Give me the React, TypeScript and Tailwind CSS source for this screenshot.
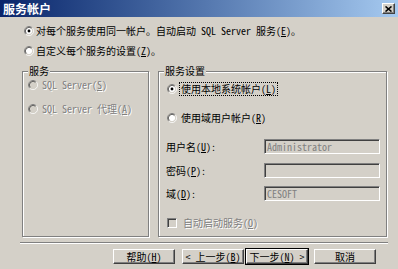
import type { ReactNode } from 'react'

const FACE = 'bg-[#d4d0c8]'
const DIM = 'text-[#808080] [text-shadow:1px_1px_0_#ffffff]'

function Radio({ checked = false, disabled = false }: { checked?: boolean; disabled?: boolean }) {
  return (
    <svg width="10" height="10" viewBox="0 0 12 12" className="shrink-0">
      <circle cx="6" cy="6" r="4" fill={disabled ? '#d4d0c8' : '#ffffff'} />
      <path d="M2.11 9.89 A5.5 5.5 0 0 1 9.89 2.11" fill="none" stroke="#808080" strokeWidth="1" />
      <path d="M9.89 2.11 A5.5 5.5 0 0 1 2.11 9.89" fill="none" stroke="#ffffff" strokeWidth="1" />
      <path d="M2.82 9.18 A4.5 4.5 0 0 1 9.18 2.82" fill="none" stroke="#404040" strokeWidth="1" />
      <path d="M9.18 2.82 A4.5 4.5 0 0 1 2.82 9.18" fill="none" stroke="#d4d0c8" strokeWidth="1" />
      {checked && <circle cx="6" cy="6" r="1.7" fill="#000000" />}
    </svg>
  )
}

function Field({ value }: { value?: string }) {
  return (
    <div className="w-[116px] h-[15px] border border-t-[#808080] border-l-[#808080] border-b-white border-r-white shadow-[inset_1px_1px_0_#404040] bg-[#d4d0c8] text-[#808080] pl-[2px] leading-[13px] text-[10px]">
      {value}
    </div>
  )
}

function Button({ children, primary = false }: { children: ReactNode; primary?: boolean }) {
  return (
    <div className={primary ? 'border border-black' : 'border border-transparent'}>
      <div className="w-[62px] h-[15px] flex items-center justify-center border border-t-white border-l-white border-b-[#404040] border-r-[#404040] shadow-[inset_-1px_-1px_0_#808080] text-[10px] leading-[12px]">
        {children}
      </div>
    </div>
  )
}

function Group({ title, className, children }: { title: string; className: string; children: ReactNode }) {
  return (
    <fieldset
      className={`${className} h-[172px] border border-[#808080] shadow-[inset_1px_1px_0_#ffffff,1px_1px_0_#ffffff]`}
    >
      <legend className={`ml-[5px] px-[1px] leading-[12px] ${FACE}`}>{title}</legend>
      {children}
    </fieldset>
  )
}

export default function App() {
  return (
    <div className={`w-[398px] h-[269px] overflow-hidden ${FACE} text-[10px] leading-[12px] text-black font-['Noto_Sans_Mono_CJK_SC','Noto_Sans_CJK_SC',sans-serif] flex flex-col`}>
      {/* title bar */}
      <div className="h-[17px] shrink-0 flex items-center justify-between pl-[3px] pr-[3px] bg-gradient-to-r from-[#0a246a] to-[#a6caf0]">
        <span className="text-white font-bold text-[12px] leading-[14px]">服务帐户</span>
        <div className="w-[13px] h-[11px] flex items-center justify-center border border-t-white border-l-white border-b-[#404040] border-r-[#404040] shadow-[inset_-1px_-1px_0_#808080] bg-[#d4d0c8]">
          <svg width="7" height="6" viewBox="0 0 7 6">
            <path d="M0.5 0.5 L6.5 5.5 M6.5 0.5 L0.5 5.5" stroke="#000" strokeWidth="1.6" />
          </svg>
        </div>
      </div>

      <div className="pl-[22px]">
        <div className="mt-[8px] ml-[2px] flex items-center gap-[2px]">
          <Radio checked />
          <span>
            对每个服务使用同一帐户。自动启动 SQL Server 服务(<u>E</u>)。
          </span>
        </div>
        <div className="mt-[8px] ml-[2px] flex items-center gap-[2px]">
          <Radio />
          <span>
            自定义每个服务的设置(<u>Z</u>)。
          </span>
        </div>

        <div className="mt-[8px] flex gap-[9px]">
          <Group title="服务" className="w-[127px]">
            <div className="pl-[5px] pt-[2px] flex flex-col gap-[12px]">
              <div className="flex items-center gap-[4px]">
                <Radio disabled />
                <span className={DIM}>
                  SQL Server(<u>S</u>)
                </span>
              </div>
              <div className="flex items-center gap-[4px]">
                <Radio disabled />
                <span className={DIM}>
                  SQL Server 代理(<u>A</u>)
                </span>
              </div>
            </div>
          </Group>

          <Group title="服务设置" className="w-[229px]">
            <div className="pl-[7px] pr-[6px] flex flex-col">
              <div className="mt-[5px] ml-[1px] flex items-center gap-[2px]">
                <Radio checked />
                <span className="border border-dotted border-black px-[1px]">
                  使用本地系统帐户(<u>L</u>)
                </span>
              </div>
              <div className="mt-[16px] ml-[1px] flex items-center gap-[4px]">
                <Radio />
                <span>
                  使用域用户帐户(<u>R</u>)
                </span>
              </div>
              <div className="mt-[15px] flex items-center justify-between">
                <span>
                  用户名(<u>U</u>):
                </span>
                <Field value="Administrator" />
              </div>
              <div className="mt-[9px] flex items-center justify-between">
                <span>
                  密码(<u>P</u>):
                </span>
                <Field />
              </div>
              <div className="mt-[8px] flex items-center justify-between">
                <span>
                  域(<u>D</u>):
                </span>
                <Field value="CESOFT" />
              </div>
              <div className="mt-[16px] ml-[1px] flex items-center gap-[6px]">
                <div className="w-[10px] h-[10px] border border-t-[#808080] border-l-[#808080] border-b-white border-r-white shadow-[inset_1px_1px_0_#404040]" />
                <span className={DIM}>
                  自动启动服务(<u>O</u>)
                </span>
              </div>
            </div>
          </Group>
        </div>
      </div>

      {/* separator */}
      <div className="mt-[5px] ml-[20px] w-[368px] h-[2px] border-t border-t-[#808080] border-b border-b-white" />

      <div className="mt-[4px] pl-[112px] flex items-center">
        <Button>
          帮助(<u>H</u>)
        </Button>
        <div className="ml-[5px]">
          <Button>
            &lt; 上一步(<u>B</u>)
          </Button>
        </div>
        <Button primary>
          下一步(<u>N</u>) &gt;
        </Button>
        <div className="ml-[4px]">
          <Button>取消</Button>
        </div>
      </div>
    </div>
  )
}
